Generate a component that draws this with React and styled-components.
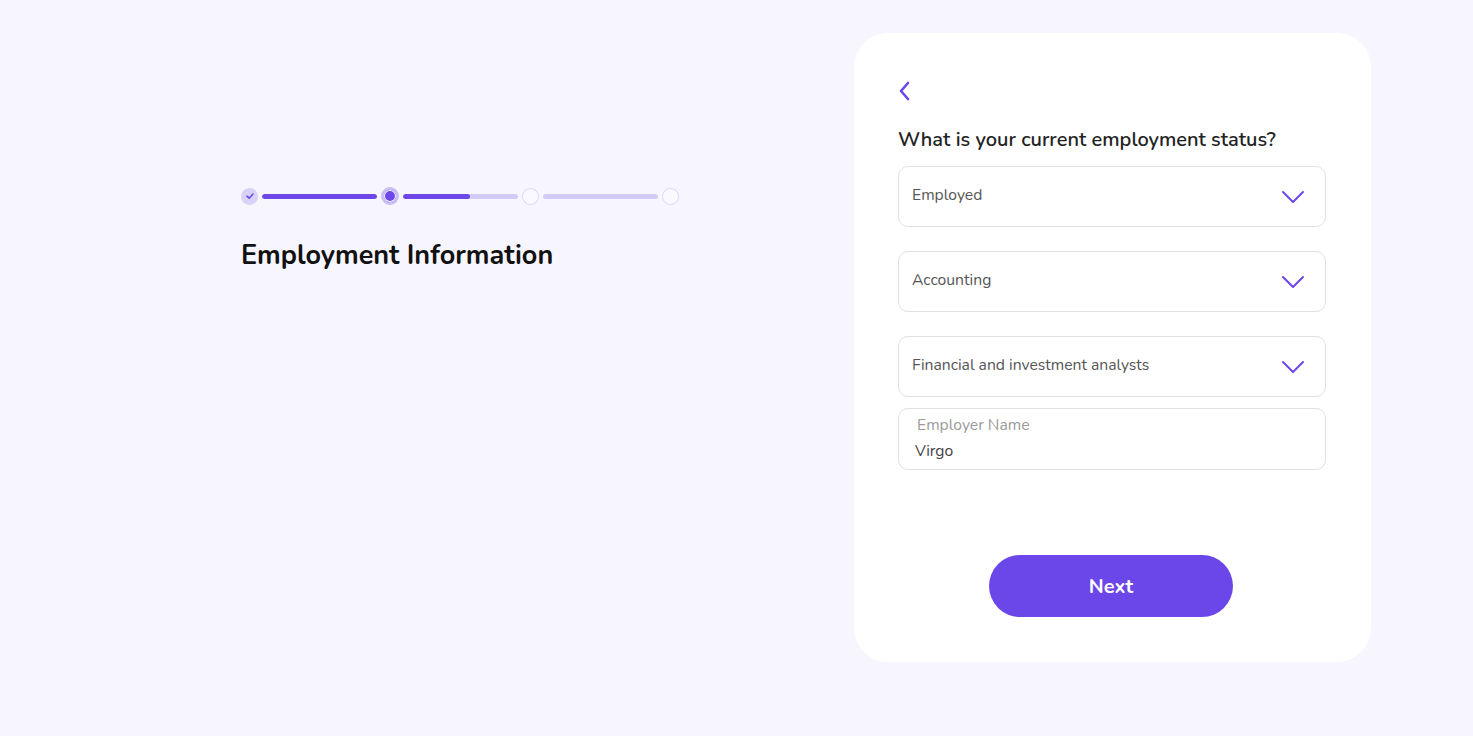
import React from 'react';
import styled, { createGlobalStyle } from 'styled-components';

const GlobalStyle = createGlobalStyle`
  html, body {
    margin: 0;
    padding: 0;
    background: #f7f5fe;
    font-family: "Nunito", Lato, "Noto Sans", sans-serif;
  }
`;

const steps = [
  { state: 'done', fill: 100 },
  { state: 'current', fill: 58 },
  { state: 'todo', fill: 0 },
  { state: 'todo' },
];

const fields = [
  { value: 'Employed' },
  { value: 'Accounting' },
  { value: 'Financial and investment analysts' },
];

const App = () => {
  return (
    <Page>
      <GlobalStyle />
      <LeftCol>
        <Stepper>
          {steps.map((s, i) => (
            <React.Fragment key={i}>
              <Dot state={s.state}>
                {s.state === 'done' && (
                  <svg width="10" height="10" viewBox="0 0 10 10">
                    <path d="M2 5.2 L4.2 7.2 L8 3" fill="none" stroke="#6c47ea" strokeWidth="1.6" strokeLinecap="round" strokeLinejoin="round" />
                  </svg>
                )}
              </Dot>
              {i < steps.length - 1 && (
                <Track>
                  <Fill style={{ width: `${s.fill}%` }} />
                </Track>
              )}
            </React.Fragment>
          ))}
        </Stepper>
        <Title>Employment Information</Title>
      </LeftCol>

      <Card>
        <BackBtn>
          <svg width="14" height="22" viewBox="0 0 14 22">
            <path d="M11 3 L4 11 L11 19" fill="none" stroke="#6c47ea" strokeWidth="2.6" strokeLinecap="round" strokeLinejoin="round" />
          </svg>
        </BackBtn>
        <Question>What is your current employment status?</Question>
        <Fields>
          {fields.map((f) => (
            <Select key={f.value}>
              <SelectText>{f.value}</SelectText>
              <svg width="24" height="14" viewBox="0 0 24 14">
                <path d="M2 2 L12 12 L22 2" fill="none" stroke="#6c47ea" strokeWidth="2" strokeLinecap="round" strokeLinejoin="round" />
              </svg>
            </Select>
          ))}
          <InputBox>
            <InputLabel>Employer Name</InputLabel>
            <InputValue>Virgo</InputValue>
          </InputBox>
        </Fields>
        <Footer>
          <NextBtn>Next</NextBtn>
        </Footer>
      </Card>
    </Page>
  );
};

export default App;

const Page = styled.div`
  display: flex;
  justify-content: space-between;
  align-items: flex-start;
  padding: 33px 102px 74px 241px;
  min-height: 736px;
  box-sizing: border-box;
`;

const LeftCol = styled.div`
  width: 438px;
  margin-top: 154px;
`;

const Stepper = styled.div`
  display: flex;
  align-items: center;
  gap: 4px;
`;

const Dot = styled.div`
  width: ${(p) => (p.state === 'current' ? '18px' : '17px')};
  height: ${(p) => (p.state === 'current' ? '18px' : '17px')};
  box-sizing: border-box;
  border-radius: 50%;
  flex-shrink: 0;
  display: flex;
  align-items: center;
  justify-content: center;
  background: ${(p) => (p.state === 'done' ? '#d9d2f8' : p.state === 'current' ? '#6c47ea' : '#faf9ff')};
  border: ${(p) => (p.state === 'current' ? '3px solid #c9bdf6' : p.state === 'todo' ? '1.5px solid #dcd5f8' : 'none')};
  box-shadow: ${(p) => (p.state === 'current' ? 'inset 0 0 0 1px #ffffff' : 'none')};
`;

const Track = styled.div`
  flex: 1;
  height: 5px;
  border-radius: 3px;
  background: #d3cbf7;
  overflow: hidden;
`;

const Fill = styled.div`
  height: 100%;
  background: #6c47ea;
  border-radius: 3px;
`;

const Title = styled.h1`
  margin: 32px 0 0;
  font-size: 27px;
  font-weight: 700;
  color: #111111;
`;

const Card = styled.div`
  width: 517px;
  height: 629px;
  box-sizing: border-box;
  background: #ffffff;
  border-radius: 34px;
  padding: 44px 45px 45px 44px;
  display: flex;
  flex-direction: column;
`;

const BackBtn = styled.div`
  height: 28px;
  display: flex;
  align-items: center;
  margin-left: -1px;
`;

const Question = styled.h2`
  margin: 21px 0 0;
  font-size: 20px;
  font-weight: 600;
  color: #222222;
`;

const Fields = styled.div`
  margin-top: 13px;
  display: flex;
  flex-direction: column;
  gap: 24px;
`;

const Select = styled.div`
  height: 61px;
  box-sizing: border-box;
  border: 1.5px solid #e1e1e1;
  border-radius: 10px;
  display: flex;
  align-items: center;
  justify-content: space-between;
  padding: 0 20px 0 13px;
`;

const SelectText = styled.span`
  font-size: 15.7px;
  color: #555555;
  margin-top: -4px;
`;

const InputBox = styled.div`
  margin-top: -13px;
  height: 62px;
  box-sizing: border-box;
  border: 1.5px solid #e1e1e1;
  border-radius: 10px;
  padding: 5px 16px 0 16px;
  display: flex;
  flex-direction: column;
`;

const InputLabel = styled.span`
  font-size: 15.7px;
  color: #9a9a9a;
  margin-left: 2px;
`;

const InputValue = styled.span`
  font-size: 15.7px;
  color: #444444;
  margin-top: 4px;
`;

const Footer = styled.div`
  margin-top: auto;
  display: flex;
  justify-content: center;
`;

const NextBtn = styled.button`
  width: 244px;
  height: 62px;
  border: none;
  border-radius: 31px;
  background: #6b46e9;
  color: #ffffff;
  font-family: inherit;
  font-size: 20px;
  font-weight: 700;
  cursor: pointer;
  margin-left: -2px;
`;
